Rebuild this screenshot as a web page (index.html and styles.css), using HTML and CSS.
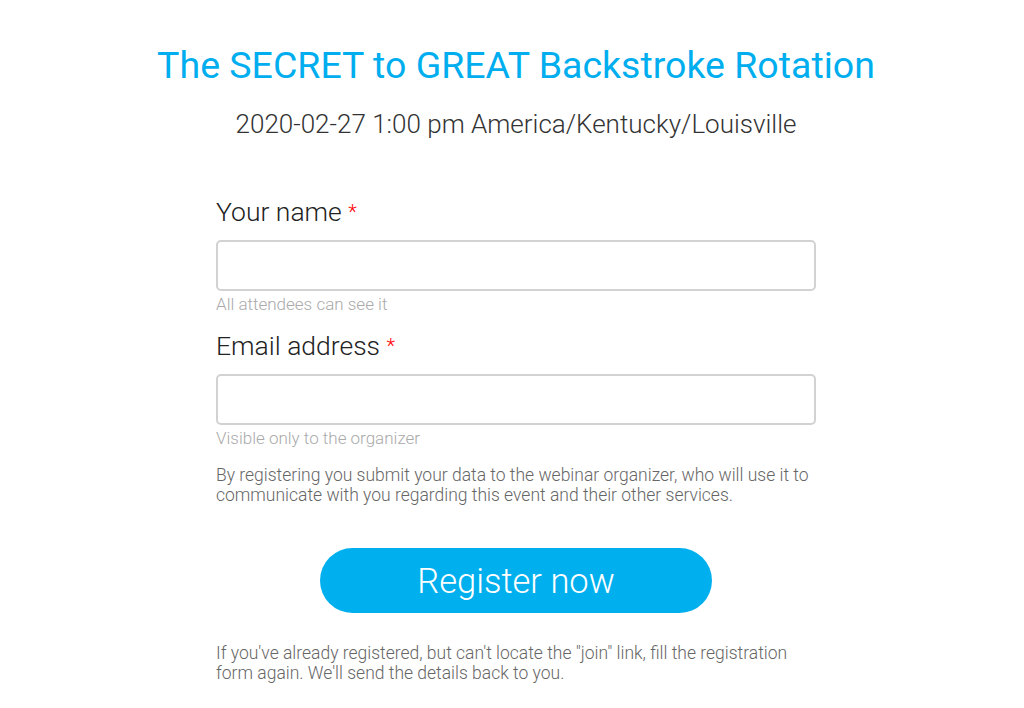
FILE: index.html
```html
<!DOCTYPE html>
<html lang="en">
<head>
  <meta charset="UTF-8">
  <title>The SECRET to GREAT Backstroke Rotation</title>
  <link rel="stylesheet" href="styles.css">
</head>
<body>

  <div class="page">
    <h1 class="title">The SECRET to GREAT Backstroke Rotation</h1>
    <p class="when">2020-02-27 1:00 pm America/Kentucky/Louisville</p>

    <form class="register">
      <div class="field">
        <label for="name">Your name <span class="req">*</span></label>
        <input type="text" id="name">
        <div class="hint">All attendees can see it</div>
      </div>

      <div class="field">
        <label for="email">Email address <span class="req">*</span></label>
        <input type="email" id="email">
        <div class="hint">Visible only to the organizer</div>
      </div>

      <p class="note">By registering you submit your data to the webinar organizer, who will use it to communicate with you regarding this event and their other services.</p>

      <div class="actions">
        <button type="button">Register now</button>
      </div>

      <p class="note">If you've already registered, but can't locate the "join" link, fill the registration form again. We'll send the details back to you.</p>
    </form>
  </div>

</body>
</html>
```

FILE: styles.css
```css
body {
  margin: 0;
  background: #fff;
  font-family: Roboto, 'Liberation Sans', sans-serif;
  color: #333;
}

.page {
  width: 1032px;
  padding-top: 40px;
  text-align: center;
}

.title {
  margin: 0;
  font-size: 37.5px;
  font-weight: 400;
  line-height: 50px;
  color: #00aeef;
}

.when {
  margin: 19px 0 0;
  font-size: 26px;
  font-weight: 300;
  line-height: 30px;
  color: #333;
}

.register {
  width: 600px;
  margin: 0 auto;
  padding-top: 58px;
  text-align: left;
}

.field {
  margin-bottom: 17px;
}

.field label {
  display: block;
  font-size: 26.5px;
  font-weight: 300;
  line-height: 30px;
  color: #222;
  margin-bottom: 13px;
}

.req {
  color: #f00;
  font-size: 20px;
  vertical-align: top;
}

.field input {
  display: block;
  box-sizing: border-box;
  width: 100%;
  height: 51px;
  border: 2px solid #d2d2d2;
  border-radius: 5px;
  background: #fff;
}

.hint {
  margin-top: 3px;
  font-size: 17px;
  font-weight: 300;
  line-height: 20px;
  color: #aaa;
}

.note {
  margin: 0;
  font-size: 17.5px;
  font-weight: 300;
  line-height: 20px;
  color: #666;
}

.field + .note {
  margin-top: 16px;
}

.actions {
  display: flex;
  justify-content: center;
  padding: 43px 0 30px;
}

.actions button {
  width: 392px;
  height: 65px;
  border: none;
  border-radius: 33px;
  background: #00b0ee;
  color: #fff;
  font-family: Roboto, 'Liberation Sans', sans-serif;
  font-size: 34.5px;
  font-weight: 300;
}
```
